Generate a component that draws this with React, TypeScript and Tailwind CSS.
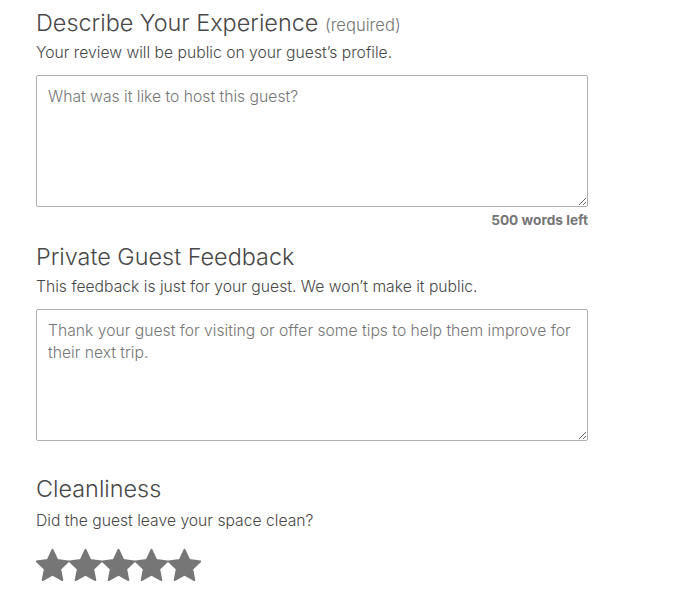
import React from 'react';

function Star() {
    return (
        <svg viewBox="1.3 1.2 21.4 20.6" className="w-[33px] h-[34px]" fill="#767676">
            <path
                d="M12 1.6l3.1 6.6 7.2.9-5.3 5 1.4 7.2L12 17.8l-6.4 3.5 1.4-7.2-5.3-5 7.2-.9z"
                stroke="#767676"
                strokeWidth="1.2"
                strokeLinejoin="round"
            />
        </svg>
    );
}

export default function App() {
    return (
        <div className="bg-white min-h-[614px] pl-[36px] pt-[8px] text-[#484848]" style={{ fontFamily: 'Inter, "Open Sans", sans-serif' }}>
            <div className="w-[552px]">
                {/* Public review */}
                <h2 className="text-[23.4px] leading-[30px] font-light">
                    Describe Your Experience <span className="text-[16.6px] leading-[16px] text-[#767676]">(required)</span>
                </h2>
                <p className="text-[15.7px] leading-[22px] mt-[4px] font-light">Your review will be public on your guest’s profile.</p>
                <textarea
                    className="block mt-[11px] w-[552px] h-[132px] border border-[#b0b0b0] rounded-[2px] px-[11px] py-[10px] text-[15.7px] leading-[22px] font-light placeholder:text-[#767676] outline-none resize-y"
                    placeholder="What was it like to host this guest?"
                />
                <div className="mt-[5px] text-right text-[13.7px] leading-[16px] font-bold text-[#767676]">500 words left</div>

                {/* Private feedback */}
                <h2 className="mt-[14px] text-[23.4px] leading-[30px] font-light">Private Guest Feedback</h2>
                <p className="text-[15.7px] leading-[22px] mt-[4px] font-light">This feedback is just for your guest. We won’t make it public.</p>
                <textarea
                    className="block mt-[11px] w-[552px] h-[132px] border border-[#b0b0b0] rounded-[2px] px-[11px] py-[10px] text-[15.7px] leading-[22px] font-light placeholder:text-[#767676] outline-none resize-y"
                    placeholder="Thank your guest for visiting or offer some tips to help them improve for their next trip."
                />

                {/* Cleanliness */}
                <h2 className="mt-[33px] text-[23.4px] leading-[30px] font-light">Cleanliness</h2>
                <p className="text-[15.7px] leading-[22px] mt-[6px] font-light">Did the guest leave your space clean?</p>
                <div className="flex mt-[16px]">
                    {[0, 1, 2, 3, 4].map(i => (
                        <Star key={i} />
                    ))}
                </div>
            </div>
        </div>
    );
}
